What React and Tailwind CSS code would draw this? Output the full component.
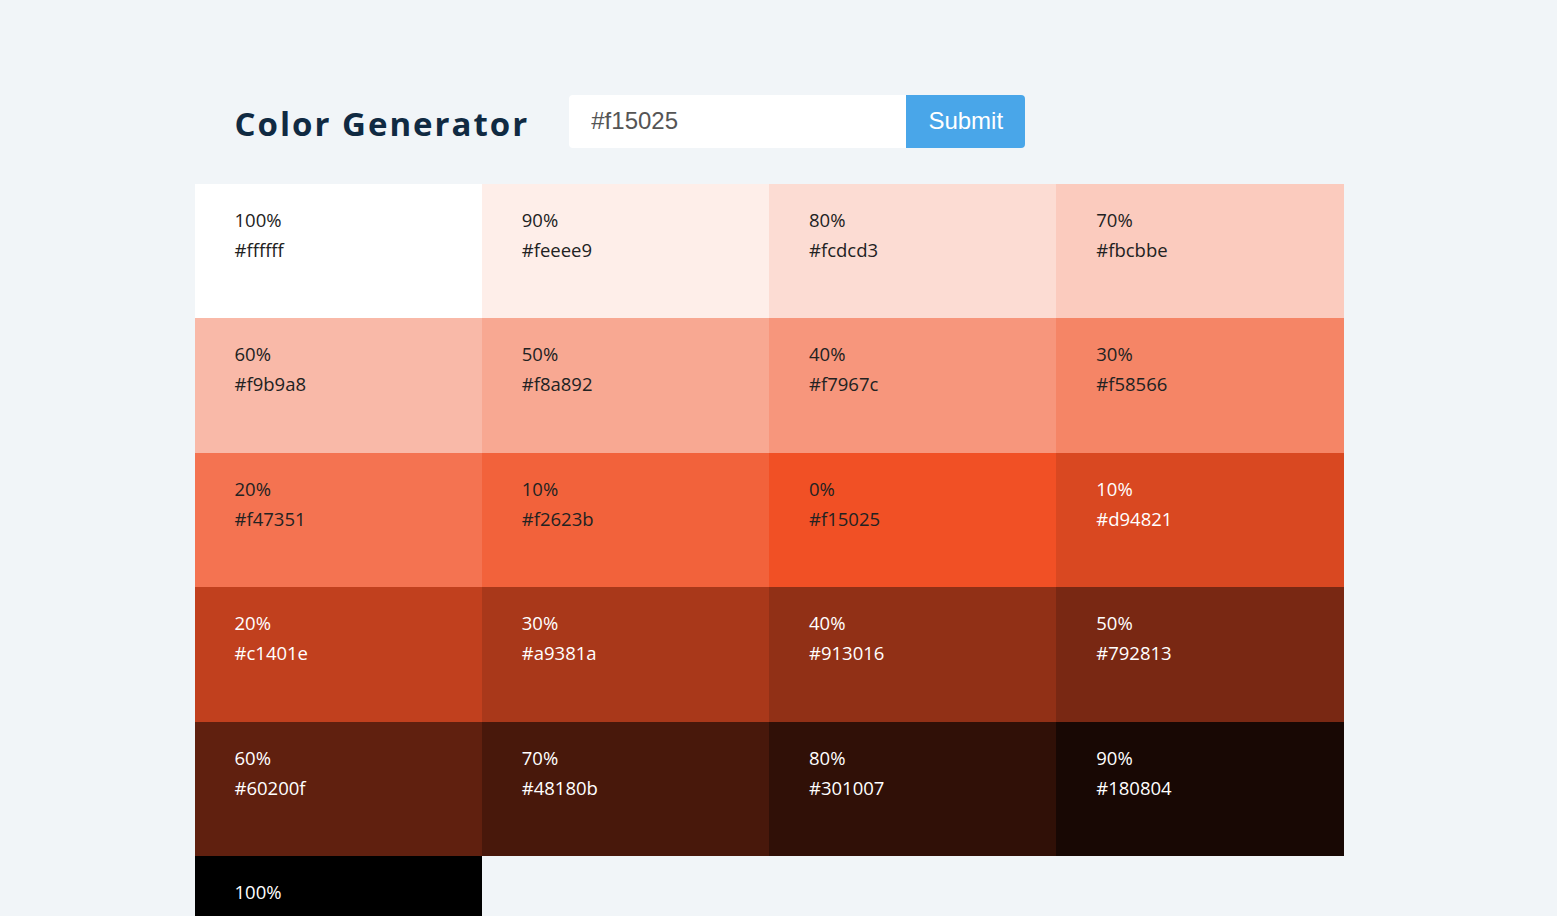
import React from "react";

const cells = [
  ["100%", "#ffffff", false],
  ["90%", "#feeee9", false],
  ["80%", "#fcdcd3", false],
  ["70%", "#fbcbbe", false],
  ["60%", "#f9b9a8", false],
  ["50%", "#f8a892", false],
  ["40%", "#f7967c", false],
  ["30%", "#f58566", false],
  ["20%", "#f47351", false],
  ["10%", "#f2623b", false],
  ["0%", "#f15025", false],
  ["10%", "#d94821", true],
  ["20%", "#c1401e", true],
  ["30%", "#a9381a", true],
  ["40%", "#913016", true],
  ["50%", "#792813", true],
  ["60%", "#60200f", true],
  ["70%", "#48180b", true],
  ["80%", "#301007", true],
  ["90%", "#180804", true],
  ["100%", "#000000", true],
];

export default function App() {
  return (
    <div className="min-h-screen bg-[#f1f5f8] pr-[19px]" style={{ fontFamily: "'Open Sans', 'Noto Sans', sans-serif" }}>
      <div className="w-[1149px] mx-auto pt-[95px]">
        <section className="flex items-center pl-10 h-[53px]">
          <h3 className="text-[33px] font-bold tracking-[2px] text-[#102a42] leading-none mr-[40px] mt-[3px]">Color Generator</h3>
          <form className="flex h-[53px]" style={{ fontFamily: "'Liberation Sans', Arial, sans-serif" }} onSubmit={(e) => e.preventDefault()}>
            <input
              type="text"
              defaultValue="#f15025"
              className="w-[337px] h-full bg-white rounded-l-[4px] pl-[22px] pb-[2px] text-[24px] text-[#555] outline-none"
            />
            <button className="w-[119px] h-full bg-[#49a6e9] text-white text-[24px] rounded-r-[4px] pb-[2px]">Submit</button>
          </form>
        </section>
        <section className="grid grid-cols-4 auto-rows-[134.4px] mt-[36px]">
          {cells.map(([w, hex, light], i) => (
            <article
              key={i}
              className={`pl-10 pt-[21px] text-[18.5px] leading-[30px] ${light ? "text-white" : "text-[#222]"}`}
              style={{ backgroundColor: hex }}
            >
              <p>{w}</p>
              <p>{hex}</p>
            </article>
          ))}
        </section>
      </div>
    </div>
  );
}
